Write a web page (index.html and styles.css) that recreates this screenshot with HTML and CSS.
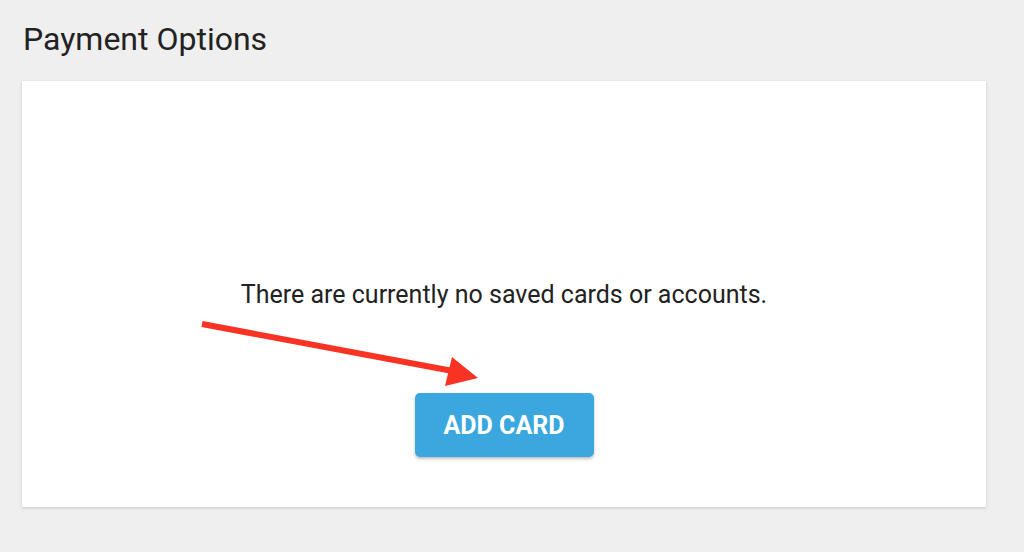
FILE: index.html
```html
<!DOCTYPE html>
<html lang="en">
<head>
  <meta charset="UTF-8">
  <title>Payment Options</title>
  <link rel="stylesheet" href="styles.css">
</head>
<body>
  <h1 class="page-title">Payment Options</h1>
  <div class="card">
    <p class="empty-text">There are currently no saved cards or accounts.</p>
    <button class="btn-add">ADD CARD</button>
    <svg class="arrow" width="1024" height="552" viewBox="0 0 1024 552">
      <line x1="202" y1="324" x2="458" y2="372" stroke="#f93323" stroke-width="6"/>
      <polygon points="452,357 445,386 478,378" fill="#f93323"/>
    </svg>
  </div>
</body>
</html>
```

FILE: styles.css
```css
html, body { margin: 0; padding: 0; height: 100%; background: #efefef; font-family: Roboto, "Liberation Sans", sans-serif; }
body { padding: 20px 38px 0 22px; box-sizing: border-box; }
.page-title { margin: 0 0 0 1px; font-size: 32px; font-weight: 400; color: #222; line-height: 38px; }
.card { position: relative; margin-top: 23px; height: 426px; background: #fff; box-shadow: 0 1px 3px rgba(0,0,0,0.18); display: flex; flex-direction: column; align-items: center; padding-top: 198px; box-sizing: border-box; }
.empty-text { margin: 0; font-size: 25px; color: #222; line-height: 32px; }
.btn-add { margin-top: 82px; width: 179px; height: 64px; border: none; border-radius: 5px; background: #3aa8df; color: #fff; font-family: Roboto, "Liberation Sans", sans-serif; font-size: 25px; font-weight: 700; box-shadow: 0 2px 3px rgba(0,0,0,0.25); cursor: pointer; }
.arrow { position: absolute; left: -22px; top: -81px; pointer-events: none; }
```
